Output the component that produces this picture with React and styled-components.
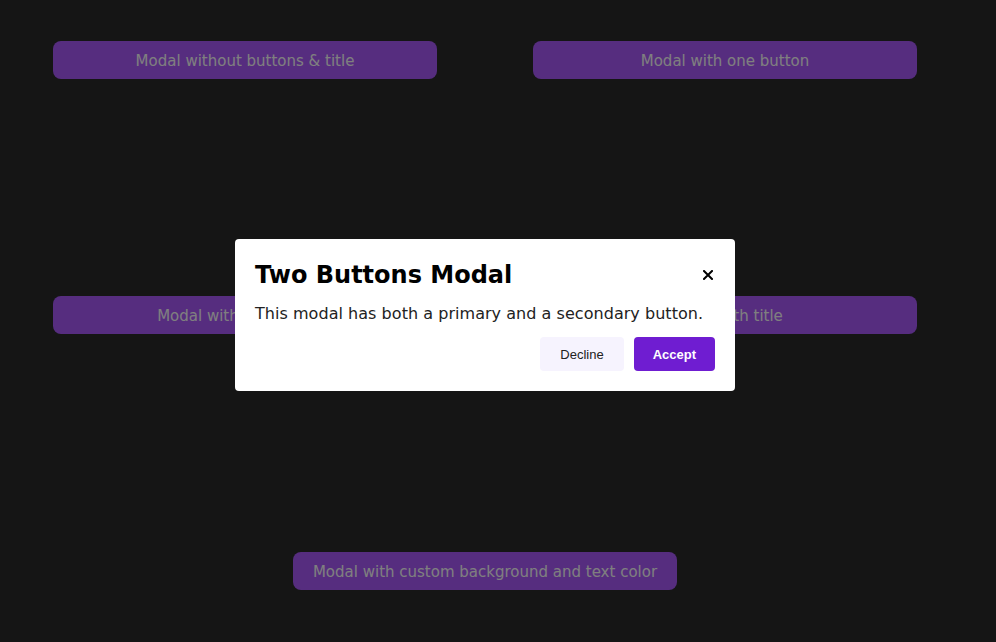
import React from "react";
import styled, { createGlobalStyle } from "styled-components";

const GlobalStyle = createGlobalStyle`
	* {
		box-sizing: border-box;
	}
	html,
	body {
		margin: 0;
		padding: 0;
		background: #2a2a2a;
		font-family: "DejaVu Sans", Verdana, sans-serif;
	}
`;

const demos = [
	{ label: "Modal without buttons & title" },
	{ label: "Modal with one button" },
	{ label: "Modal with two buttons" },
	{ label: "Modal with title" },
	{ label: "Modal with custom background and text color", wide: true },
];

function App() {
	return (
		<>
			<GlobalStyle />
			<Page>
				{demos.map((demo) => (
					<OpenButton key={demo.label} $wide={demo.wide}>
						{demo.label}
					</OpenButton>
				))}
			</Page>

			<Overlay>
				<ModalBox role="dialog">
					<ModalHeader>
						<ModalTitle>Two Buttons Modal</ModalTitle>
						<CloseButton aria-label="Close">
							<svg width="10" height="10" viewBox="0 0 10 10">
								<path
									d="M1 1 L9 9 M9 1 L1 9"
									stroke="#000"
									strokeWidth="2"
									strokeLinecap="square"
								/>
							</svg>
						</CloseButton>
					</ModalHeader>
					<ModalText>
						This modal has both a primary and a secondary button.
					</ModalText>
					<ModalFooter>
						<ActionButton>Decline</ActionButton>
						<ActionButton $primary>Accept</ActionButton>
					</ModalFooter>
				</ModalBox>
			</Overlay>
		</>
	);
}

export default App;

const Page = styled.main`
	display: grid;
	grid-template-columns: 384px 384px;
	grid-template-rows: 38px 38px 38px;
	column-gap: 96px;
	row-gap: 217px;
	padding: 41px 0 0 53px;
	min-height: 642px;
	align-content: start;
`;

const OpenButton = styled.button`
	height: 38px;
	width: 384px;
	padding: 1px 0 0;
	border: none;
	border-radius: 8px;
	background: #ac5afe;
	color: #ffffff;
	font-family: "DejaVu Sans", Verdana, sans-serif;
	font-size: 15px;
	cursor: pointer;
	grid-column: ${(p) => (p.$wide ? "1 / span 2" : "auto")};
	justify-self: center;
	margin-top: ${(p) => (p.$wide ? "1px" : "0")};
`;

const Overlay = styled.div`
	position: fixed;
	inset: 0;
	background: rgba(0, 0, 0, 0.5);
	display: flex;
	align-items: center;
	justify-content: center;
	padding: 0 26px 12px 0;
`;

const ModalBox = styled.div`
	width: 500px;
	background: #ffffff;
	border-radius: 4px;
	padding: 20px;
`;

const ModalHeader = styled.div`
	display: flex;
	justify-content: space-between;
	align-items: center;
`;

const ModalTitle = styled.h2`
	margin: 0;
	font-size: 24px;
	line-height: 30px;
	font-weight: bold;
	color: #000;
	padding-top: 1px;
`;

const CloseButton = styled.button`
	display: flex;
	align-items: center;
	justify-content: center;
	width: 14px;
	height: 14px;
	padding: 0;
	margin: 0 0 0 0;
	border: none;
	background: none;
	cursor: pointer;
`;

const ModalText = styled.p`
	margin: 14px 0 14px;
	font-size: 16px;
	line-height: 19px;
	letter-spacing: 0.04px;
	color: #222;
`;

const ModalFooter = styled.div`
	display: flex;
	justify-content: flex-end;
	gap: 10px;
`;

const ActionButton = styled.button`
	height: 34px;
	padding: ${(p) => (p.$primary ? "0 19px" : "0 20px")};
	border: none;
	border-radius: 4px;
	font-family: "Liberation Sans", Arial, sans-serif;
	font-size: 13px;
	font-weight: ${(p) => (p.$primary ? "bold" : "normal")};
	background: ${(p) => (p.$primary ? "#6f1dd1" : "#f6f3fe")};
	color: ${(p) => (p.$primary ? "#ffffff" : "#222222")};
	cursor: pointer;
`;
